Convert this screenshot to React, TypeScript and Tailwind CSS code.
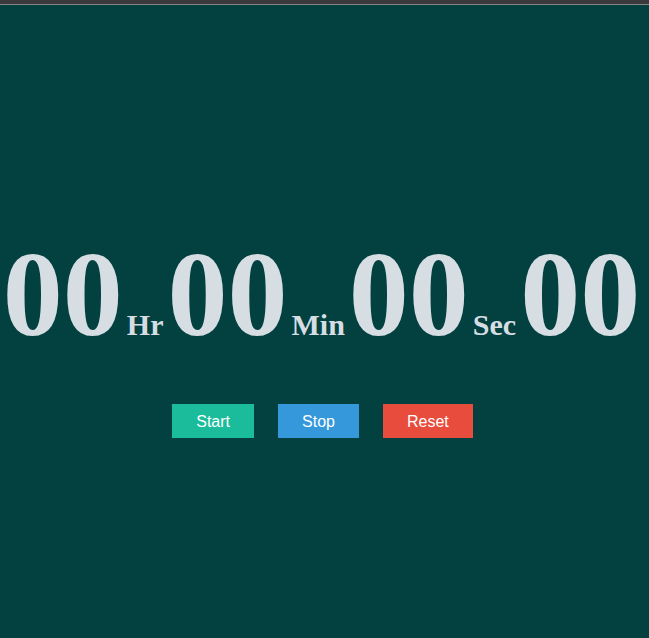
const units = [
  { value: '00', label: 'Hr' },
  { value: '00', label: 'Min' },
  { value: '00', label: 'Sec' },
  { value: '00', label: '' },
];

export default function App() {
  return (
    <div className="flex h-[638px] w-full flex-col bg-[#024140]">
      <div className="h-[4px] w-full bg-[#3a3a3d]" />
      <div className="h-px w-full bg-[#858585]" />

      <div
        className="mt-[230px] flex items-baseline justify-center gap-1 pr-[6px] leading-none text-[#d6dde3]"
        style={{ fontFamily: '"Liberation Serif", "Times New Roman", serif' }}
      >
        {units.map((u, i) => (
          <div key={i} className="flex items-baseline gap-1">
            <span className="text-[120px] font-bold">{u.value}</span>
            {u.label && <span className="text-[30px] font-bold">{u.label}</span>}
          </div>
        ))}
      </div>

      <div
        className="mt-[49px] flex justify-center gap-6 pr-[4px] text-base text-white"
        style={{ fontFamily: '"Liberation Sans", Arial, sans-serif' }}
      >
        <button className="flex h-[34px] items-center bg-[#1abc9c] px-6 pt-[2px]">Start</button>
        <button className="flex h-[34px] items-center bg-[#3498db] px-6 pt-[2px]">Stop</button>
        <button className="flex h-[34px] items-center bg-[#e74c3c] px-6 pt-[2px]">Reset</button>
      </div>
    </div>
  );
}
